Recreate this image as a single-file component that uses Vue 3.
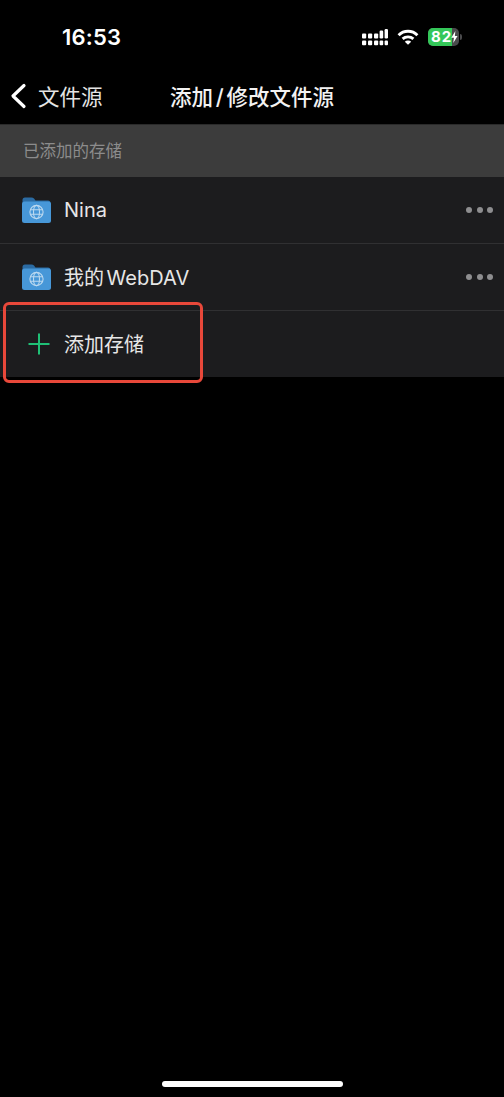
<script setup>
const items = [
  { id: 1, name: 'Nina' },
  { id: 2, name: '我的 WebDAV' },
];
// low columns of the signal icon, drawn as two dots each
const signalCols = [0, 6, 12];
</script>

<template>
  <div class="screen">
    <div class="status">
      <span class="time">16:53</span>
      <div class="status-right">
        <svg class="signal" width="26" height="18" viewBox="0 0 26 18">
          <g fill="#fff">
            <template v-for="x in signalCols" :key="x">
              <rect :x="x" y="5.4" width="4.2" height="5" rx="1" />
              <rect :x="x" y="12.6" width="4.2" height="4.6" rx="1" />
            </template>
            <rect x="17.6" y="2.6" width="3.6" height="7.8" rx="1.2" />
            <rect x="17.6" y="12.6" width="3.6" height="4.6" rx="1" />
            <rect x="22.6" y="1" width="3.4" height="9.4" rx="1.2" />
            <rect x="22.6" y="12.6" width="3.4" height="4.6" rx="1" />
          </g>
        </svg>
        <svg class="wifi" width="22" height="16" viewBox="0 0 22 16">
          <path d="M1.6 6.2 A13.4 13.4 0 0 1 20.4 6.2" fill="none" stroke="#fff" stroke-width="3" />
          <path d="M5.6 9.9 A8 8 0 0 1 16.4 9.9" fill="none" stroke="#fff" stroke-width="2.8" />
          <path d="M11 15.8 L7.8 12.8 A4.6 4.6 0 0 1 14.2 12.8 Z" fill="#fff" />
        </svg>
        <div class="battery">
          <div class="battery-body">
            <span class="battery-fill">82</span>
            <svg class="bolt" width="7" height="12" viewBox="0 0 9 13" preserveAspectRatio="none">
              <path d="M5.6 0 L0.4 7.2 H3.8 L2.9 13 L8.4 5.4 H5 Z" fill="#fff" />
            </svg>
          </div>
          <span class="battery-tip"></span>
        </div>
      </div>
    </div>

    <div class="nav">
      <div class="back">
        <svg width="18" height="26" viewBox="0 0 18 26">
          <path d="M15 2.5 L4 13 L15 23.5" fill="none" stroke="#fff" stroke-width="3.2" stroke-linecap="round" stroke-linejoin="round" />
        </svg>
        <span class="back-label">文件源</span>
      </div>
      <div class="title">添加 / 修改文件源</div>
    </div>

    <div class="section-head">已添加的存储</div>

    <div class="list">
      <div v-for="item in items" :key="item.id" class="row">
        <svg class="folder" width="29" height="26" viewBox="0 0 29 26">
          <path d="M0.5 3 Q0.5 0.5 3 0.5 H9.5 Q11 0.5 12 1.6 L13.5 3.5 H26 Q28.5 3.5 28.5 6 V10 H0.5 Z" fill="#2b6ba3" />
          <rect x="0" y="4.5" width="29" height="21.5" rx="2.5" fill="#4797d8" />
          <g fill="none" stroke="#bcd9f0" stroke-width="1.1">
            <circle cx="14.5" cy="15" r="6.6" />
            <ellipse cx="14.5" cy="15" rx="3" ry="6.6" />
            <path d="M8.5 12.7 H20.5 M8.5 17.3 H20.5" />
          </g>
        </svg>
        <span class="name">{{ item.name }}</span>
        <div class="more">
          <i></i><i></i><i></i>
        </div>
      </div>
      <div class="row add">
        <svg class="plus" width="22" height="22" viewBox="0 0 22 22">
          <path d="M11 0.5 V21.5 M0.5 11 H21.5" stroke="#1fc076" stroke-width="2" fill="none" />
        </svg>
        <span class="name">添加存储</span>
        <div class="highlight"></div>
      </div>
    </div>

    <div class="home-bar"></div>
  </div>
</template>

<style>
html, body {
  margin: 0;
  background: #000;
}
</style>

<style scoped>
.screen {
  position: relative;
  width: 504px;
  height: 1097px;
  overflow: hidden;
  background: #000;
  color: #fff;
  font-family: "Inter", "Noto Sans CJK SC", sans-serif;
}

.status {
  height: 70px;
  padding: 0 42px 0 62px;
  box-sizing: border-box;
  display: flex;
  justify-content: space-between;
  align-items: flex-start;
}

.time {
  margin-top: 23px;
  font-size: 22px;
  line-height: 28px;
  font-weight: 600;
  letter-spacing: 0.2px;
}

.status-right {
  display: flex;
  align-items: center;
  margin-top: 28px;
  height: 18px;
  gap: 9px;
}

.battery {
  display: flex;
  align-items: center;
  gap: 1px;
}

.battery-body {
  position: relative;
  width: 31px;
  height: 18px;
  border-radius: 5px;
  background: #4a4a4c;
  overflow: hidden;
}

.battery-fill {
  display: block;
  width: 24px;
  height: 18px;
  padding-left: 3px;
  box-sizing: border-box;
  background: #34c759;
  color: #fff;
  font-size: 15px;
  font-weight: 700;
  line-height: 18px;
  letter-spacing: 1px;
}

.bolt {
  position: absolute;
  right: 1px;
  top: 3px;
}

.battery-tip {
  width: 2px;
  height: 6px;
  border-radius: 0 2px 2px 0;
  background: #4a4a4c;
}

.nav {
  position: relative;
  height: 54px;
  display: flex;
  align-items: center;
  justify-content: center;
  padding-bottom: 2px;
  box-sizing: border-box;
}

.back {
  position: absolute;
  left: 9px;
  top: 0;
  bottom: 0;
  display: flex;
  align-items: center;
  gap: 11px;
  font-size: 21.5px;
  color: #e4e4e4;
  padding-bottom: 2px;
}

.back-label {
  margin-bottom: 2px;
}

.title {
  font-size: 21.5px;
  font-weight: 500;
  color: #f2f2f2;
  word-spacing: -3px;
  margin-bottom: 2px;
}

.section-head {
  height: 53px;
  padding-left: 23px;
  padding-bottom: 3px;
  display: flex;
  align-items: center;
  box-sizing: border-box;
  background: #3c3c3c;
  border-top: 1px solid #2a2a2a;
  color: #8c8c8c;
  font-size: 16.5px;
}

.list {
  background: #1c1c1e;
}

.row {
  position: relative;
  height: 67px;
  display: flex;
  align-items: center;
  padding-left: 22px;
  box-sizing: border-box;
  border-bottom: 1px solid #303032;
}

.row:last-child {
  border-bottom: none;
  height: 66px;
}

.folder {
  flex: none;
}

.name {
  margin-left: 13px;
  margin-bottom: 1px;
  font-size: 20px;
  color: #e6e6e6;
  word-spacing: -3px;
}

.more {
  margin-left: auto;
  display: flex;
  gap: 4.3px;
  padding-right: 11px;
}

.more i {
  display: block;
  width: 6px;
  height: 6px;
  border-radius: 50%;
  background: #8e8e90;
}

.add {
  padding-left: 28px;
}

.plus {
  flex: none;
}

.add .name {
  margin-left: 14px;
}

.highlight {
  position: absolute;
  left: 3px;
  top: -9px;
  width: 200px;
  height: 81px;
  box-sizing: border-box;
  border: 3px solid #e8483a;
  border-radius: 6px;
}

.home-bar {
  position: absolute;
  left: 162px;
  bottom: 10px;
  width: 181px;
  height: 6px;
  border-radius: 3px;
  background: #fff;
}
</style>
